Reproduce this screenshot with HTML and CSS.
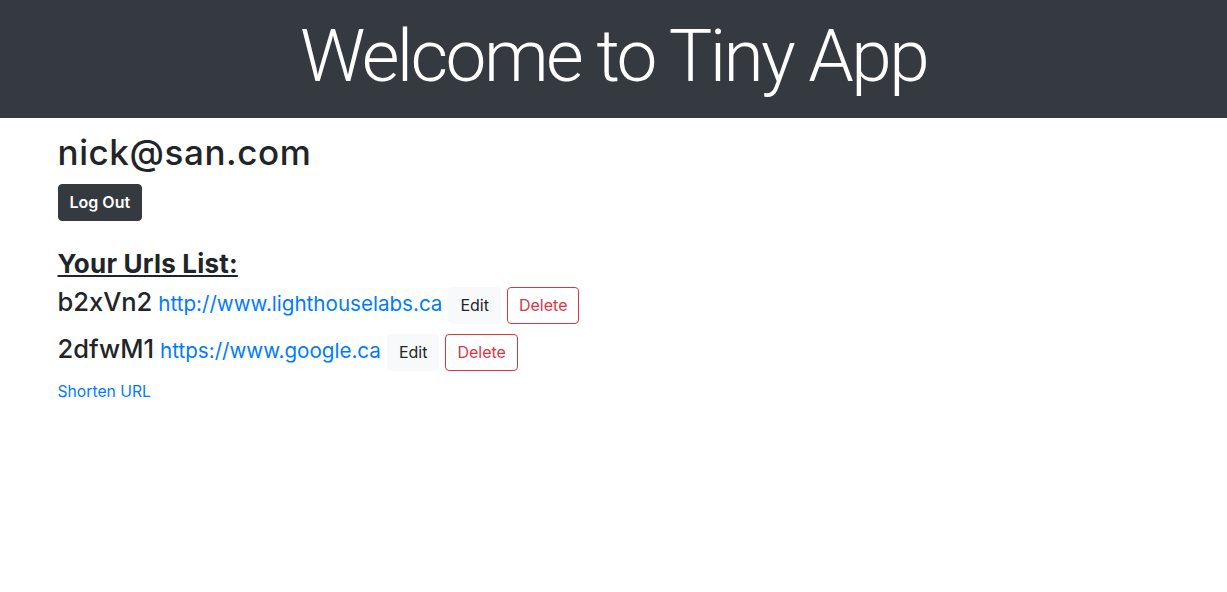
FILE: index.html
```html
<!DOCTYPE html>
<html>
<head>
<meta charset="utf-8">
<link rel="stylesheet" href="styles.css">
</head>
<body>
<header class="hero">
  <h1 class="hero-title">Welcome to Tiny App</h1>
</header>
<main class="container">
  <h2 class="user">nick@san.com</h2>
  <button class="btn btn-dark">Log Out</button>
  <h4 class="list-title">Your Urls List:</h4>
  <div class="url-row">
    <span class="code">b2xVn2</span>
    <a class="long" href="#">http://www.lighthouselabs.ca</a>
    <button class="btn btn-light">Edit</button>
    <button class="btn btn-outline-danger">Delete</button>
  </div>
  <div class="url-row">
    <span class="code">2dfwM1</span>
    <a class="long" href="#">https://www.google.ca</a>
    <button class="btn btn-light">Edit</button>
    <button class="btn btn-outline-danger">Delete</button>
  </div>
  <a class="shorten" href="#">Shorten URL</a>
</main>
</body>
</html>
```
FILE: styles.css
```css
* { box-sizing: border-box; }
body {
  margin: 0;
  font-family: Inter, "Liberation Sans", sans-serif;
  font-size: 16px;
  line-height: 1.5;
  color: #212529;
  background: #fff;
}
.hero {
  background: #343a40;
  height: 118px;
  padding-bottom: 5px;
  display: flex;
  align-items: center;
  justify-content: center;
}
.hero-title {
  margin: 0;
  color: #fff;
  font-family: Roboto, "Liberation Sans", sans-serif;
  font-weight: 300;
  font-size: 73px;
  letter-spacing: -2.6px;
  line-height: 1.2;
}
.container {
  width: 1140px;
  margin: 0 auto;
  padding: 13px 15px 0 14px;
  display: flex;
  flex-direction: column;
  align-items: flex-start;
}
.user {
  margin: 0 0 11px;
  font-size: 35px;
  font-weight: 500;
  line-height: 1.2;
  letter-spacing: 0.6px;
}
.btn {
  font-family: inherit;
  font-size: 16px;
  line-height: 25px;
  padding: 5px 11px;
  border: 1px solid transparent;
  border-radius: 4px;
  cursor: pointer;
}
.btn-dark {
  background: #343a40;
  border-color: #343a40;
  color: #fff;
  font-weight: 600;
}
.btn-light {
  background: #f8f9fa;
  border-color: #f8f9fa;
  color: #212529;
}
.btn-outline-danger {
  background: transparent;
  border-color: #dc3545;
  color: #dc3545;
}
.list-title {
  margin: 27px 0 8px;
  font-size: 26px;
  font-weight: 700;
  line-height: 1.2;
  letter-spacing: 0.2px;
  text-decoration: underline;
}
.url-row {
  display: flex;
  align-items: baseline;
  gap: 6px;
}
.url-row + .url-row {
  margin-top: 10px;
}
.code {
  font-size: 25.5px;
  font-weight: 500;
  line-height: 1.2;
}
.long {
  color: #007bff;
  text-decoration: none;
  font-size: 20.6px;
}
.shorten {
  margin-top: 9px;
  color: #007bff;
  text-decoration: none;
  font-size: 15.7px;
}
```
